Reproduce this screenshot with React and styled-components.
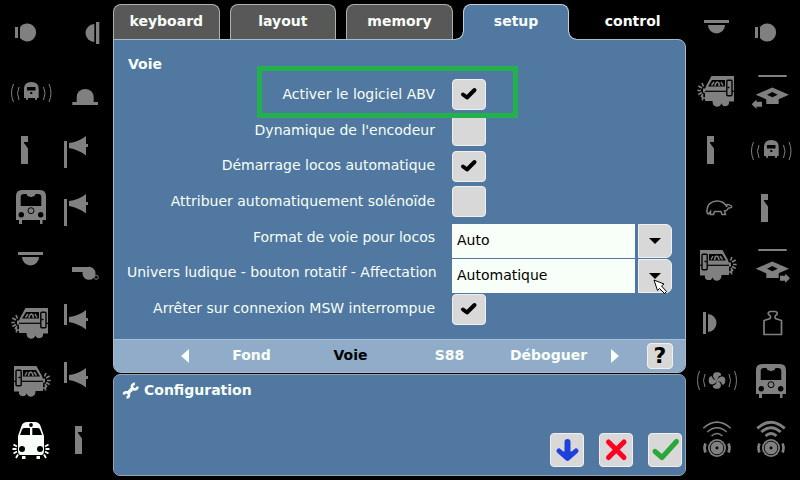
import React, { useState } from 'react'
import styled, { createGlobalStyle, css } from 'styled-components'

const GlobalStyle = createGlobalStyle`
  *, *::before, *::after {
    box-sizing: border-box;
  }
  body {
    margin: 0;
    background: #000;
    color: #f8fff8;
    font-family: "DejaVu Sans", Verdana, sans-serif;
    font-size: 14px;
    line-height: 18px;
  }
  button, select, input {
    font: inherit;
    color: inherit;
    margin: 0;
    padding: 0;
  }
`;

const burst = (
  <g stroke="currentColor" strokeWidth="1.6">
    <path d="M7.300 29.500 H11 M8.300 25 L12 27 M12 22 L13.500 25.500 M8.300 33.500 L12 31.500 M11 36 L13 33" />
    <path d="M13 27.500 h3 v4 h-3 Z" fill="currentColor" stroke="none" />
  </g>
)

const waves = (
  <path
    d="M9.5 23 Q5.5 32 9.5 41 M15 26 Q12 32 15 39 M39.5 26 Q42.5 32 39.5 39 M45 23 Q49 32 45 41"
    fill="none"
    stroke="currentColor"
  />
)

const sideLoco = (
  <g>
    {burst}
    <path d="M21.5 15 H44 V40.5 H39 A3.5 3.5 0 0 1 31.5 42 A3.5 3.5 0 0 1 23 41 L22.5 40 H15 V34 L14.5 30 L16 25 Z" />
    <path d="M12 37 h4 M12.5 34.5 v5" stroke="currentColor" strokeWidth="1.6" />
    <circle cx="26.3" cy="41" r="3.7" />
    <circle cx="35" cy="41" r="3.7" />
    <path d="M22 19 H35 V25.5 H18 Z" fill="#000" />
    <path d="M21.5 24.5 L24 21 M25 25 q0.500 -4 3 -4 M28.500 21 L29.500 25 M31 21 L33 24.500" fill="none" stroke="currentColor" strokeWidth="1.5" />
    <path d="M15 30.300 H44" stroke="#000" strokeWidth="1.2" />
    <rect x="36.8" y="19.3" width="5.2" height="15.4" rx="1" stroke="#000" strokeWidth="1.4" />
    <path d="M37.5 26.5 h2" stroke="#000" strokeWidth="1.5" />
  </g>
)

const horn = (
  <g>
    <path d="M11 24 C17 23.5 23 21 28 17 V36.5 C23 32.5 17 30 11 29 Z" />
    <path d="M28 25 h2 v3 h-2 Z" />
  </g>
)

const gantry = (
  <g>
    <path d="M14.3 14 H42.7 V16 H14.3 Z" />
    <path fillRule="evenodd" d="M11.7 33.7 L28.3 26.5 L45 33.7 L28.3 41 Z M23 33.7 L28.3 36.3 L33.7 33.7 L28.3 31 Z" />
    <path d="M22.3 37.5 H34.7 V43 H22.3 Z" />
  </g>
)

const wheel = (
  <g>
    <circle cx="27" cy="39" r="9" />
    <circle cx="27" cy="39" r="6.8" fill="none" stroke="#000" strokeWidth="0.9" />
    <circle cx="27" cy="39" r="1.4" fill="#000" />
    <path d="M15.500 34.500 Q13.500 39 15.500 43.500 M38.500 34.500 Q40.500 39 38.500 43.500" fill="none" stroke="currentColor" strokeWidth="2.6" />
  </g>
)

const arcs = "M13.3 19.3 Q27 7 40.7 19.3 M17.3 23 Q27 14.5 36.7 23 M21.5 27 Q27 22 32.5 27"

// drawings on a 54 x 58 key
const drawings = {
  lampSide: (
    <g>
      <rect x="11" y="24" width="3" height="11" />
      <path d="M16 24 A9 9 0 1 1 16 35 Z" />
    </g>
  ),
  lampWall: (
    <g>
      <path d="M36.3 21 V39 A8.8 9 0 0 1 36.3 21 Z" />
      <rect x="38" y="19" width="3.3" height="22" />
    </g>
  ),
  lampTop: (
    <g>
      <rect x="14" y="17" width="25" height="3" />
      <path d="M18 22 H35 A8.5 8.5 0 0 1 18 22 Z" />
    </g>
  ),
  bell: (
    <g>
      <path d="M18.7 41 V36 A8.5 8 0 0 1 35.7 36 V41 Z" />
      <rect x="14.3" y="41" width="25.7" height="3" />
    </g>
  ),
  railcar: (
    <g>
      {waves}
      <path fillRule="evenodd" d="M20 37 V28 Q20 21 27.3 21 Q34.7 21 34.7 28 V37 H33 V38.7 H31 V37 H24 V38.7 H22 V37 Z M23 26 V29.5 H31.5 V26 Z M26.3 31 V33 H28.3 V31 Z" />
    </g>
  ),
  marker: <path d="M17 17 H24 V23 H20 V24 L24 29.500 V45 H17 Z" />,
  hornLow: (
    <g>
      <rect x="6" y="22" width="3" height="27" />
      {horn}
    </g>
  ),
  hornHigh: (
    <g>
      <rect x="6" y="11" width="3" height="21" />
      {horn}
    </g>
  ),
  loco: (
    <g>
      <path d="M12 43 V19 Q12 13 18 13 H36 Q42 13 42 19 V43 H38.5 V47 H36 V43 H18 V47 H15 V43 Z" />
      <path d="M16.7 29 V20 Q16.7 17 20 17 H22.5 Q23.5 20 25.5 19.5 Q27 21 28.5 19.5 Q30.5 20 31.5 17 H34 Q37.3 17 37.3 20 V29 Z" fill="#000" />
      <circle cx="17.3" cy="37.7" r="2.7" fill="#000" />
      <circle cx="36.7" cy="37.7" r="2.7" fill="#000" />
      <circle cx="27" cy="33.7" r="3" fill="none" stroke="#000" />
    </g>
  ),
  whistle: (
    <g>
      <path d="M14 32 H32 V37 H14 Z" />
      <circle cx="31" cy="38.3" r="6.5" />
      <circle cx="38.3" cy="42.3" r="2" fill="#000" stroke="currentColor" />
    </g>
  ),
  locoLeft: sideLoco,
  locoRight: <g transform="translate(54 0) scale(-1 1)">{sideLoco}</g>,
  lampWallRight: (
    <g>
      <path d="M18 21 V39 A8.5 9 0 0 0 18 21 Z" />
      <rect x="13" y="19" width="3" height="22" />
    </g>
  ),
  headlights: (
    <g>
      <path d="M16 46 Q14 45 14 42 V27 L17.500 17 Q19 13 23 13 H31 Q35 13 36.500 17 L40 27 V42 Q40 45 38 46 Z" />
      <path d="M20 19 H26 V26 H16 L18 20.500 Q18.500 19 20 19 Z M28.300 19 H34 Q35.500 19 36 20.500 L38 26 H28.300 Z" fill="#000" />
      <circle cx="27" cy="16" r="1.900" fill="#000" />
      <circle cx="18" cy="40" r="3" fill="#000" />
      <circle cx="36" cy="40" r="3" fill="#000" />
      <path d="M18 47 h3.500 v3 h-3.500 Z M32.500 47 h3.500 v3 h-3.500 Z" />
      <path d="M12.500 40 H8.500 M13 37.500 L9.500 35.500 M13 42.500 L9.500 44.500 M14 45.500 L12 49 M41.500 40 H45.500 M41 37.500 L44.500 35.500 M41 42.500 L44.500 44.500 M40 45.500 L42 49" stroke="currentColor" strokeWidth="1.800" />
    </g>
  ),
  gantryLeft: (
    <g>
      {gantry}
      <path d="M7.7 43.3 L12.5 38.5 V40.8 H18 V45.8 H12.5 V48 Z" />
    </g>
  ),
  gantryRight: (
    <g>
      {gantry}
      <path d="M46 43.3 L41.2 38.5 V40.8 H36 V45.8 H41.2 V48 Z" />
    </g>
  ),
  turtle: (
    <path
      d="M17 34 C17 27 22 24 27 24 C32 24 35.5 27 37 30 L36.5 28 Q38 26.5 41.5 29 Q42.5 31 38.5 31 Q37 34 34.5 34 L35.5 37.5 H32 L31 34.5 H24.5 L23.5 37.5 H20.5 L20.5 34.5 L18.5 37 Q16.5 36 17 34 Z"
      fill="none"
      stroke="currentColor"
      strokeWidth="1.5"
    />
  ),
  weight: (
    <path
      d="M20 41.5 V27.5 L26 25.5 Q27.5 23 24.5 21.5 Q23.5 19 26.5 18.5 H31 Q34 19 33 21.5 Q30 23 31.5 25.5 L37.5 27.5 V41.5 Z"
      fill="none"
      stroke="currentColor"
      strokeWidth="1.7"
    />
  ),
  fan: (
    <g>
      <path
        d="M9.5 20 Q5.5 29.5 9.5 39 M15 23 Q12 29.5 15 36 M39 23 Q42 29.5 39 36 M44.5 20 Q48.5 29.5 44.5 39"
        fill="none"
        stroke="currentColor"
      />
      {[0, 90, 180, 270].map((a) => (
        <path key={a} transform={`rotate(${a} 27 29.5)`} d="M27.500 29.500 C23 28.500 21.500 23 25 21.500 C29 20.500 32 22.500 31 24.500 C28.500 25 27.500 26.500 27.500 29.500 Z" />
      ))}
    </g>
  ),
  soundLow: (
    <g>
      {wheel}
      <path d={arcs} fill="none" stroke="currentColor" strokeWidth="1.5" />
    </g>
  ),
  soundHigh: (
    <g>
      {wheel}
      <path d={arcs} fill="none" stroke="currentColor" strokeWidth="2.9" />
    </g>
  ),
}

const leftKeys = [
  'lampSide', 'lampWall',
  'railcar', 'bell',
  'marker', 'hornLow',
  'loco', 'hornLow',
  'lampTop', 'whistle',
  'locoLeft', 'hornHigh',
  'locoRight', 'hornHigh',
  'headlights', 'marker',
]

const rightKeys = [
  'lampTop', 'lampSide',
  'locoLeft', 'gantryLeft',
  'marker', 'railcar',
  'turtle', 'marker',
  'locoRight', 'gantryRight',
  'lampWallRight', 'weight',
  'fan', 'loco',
  'soundLow', 'soundHigh',
]

const tabs = ['keyboard', 'layout', 'memory', 'setup', 'control']
const pages = ['Fond', 'Voie', 'S88', 'Déboguer']

function FunctionKeys({ keys, side }) {
  return (
    <Keys aria-label={side}>
      {keys.map((name, i) => (
        <Key key={i} type="button" aria-label={name} $lit={name === 'headlights'}>
          <svg width="54" height="58" viewBox="0 0 54 58" fill="currentColor">
            {drawings[name]}
          </svg>
        </Key>
      ))}
    </Keys>
  )
}

function CheckRow({ id, label, checked, marked }) {
  const [on, setOn] = useState(checked)
  return (
    <Row $marked={marked}>
      <Label htmlFor={id}>{label}</Label>
      <CheckWrap>
        <Check id={id} type="checkbox" checked={on} onChange={() => setOn(!on)} />
        {on && (
          <Tick width="34" height="30" viewBox="0 0 34 30">
            <path d="M11 15.5 L15 18.5 L22.5 11" fill="none" stroke="#000" strokeWidth="4" strokeLinecap="round" strokeLinejoin="round" />
          </Tick>
        )}
      </CheckWrap>
    </Row>
  )
}

function SelectRow({ id, label, value, children }) {
  return (
    <Row>
      <Label htmlFor={id}>{label}</Label>
      <Combo>
        <Select id={id} defaultValue={value}>
          <option>{value}</option>
        </Select>
        <Arrow type="button" aria-label={label}>
          <svg width="12" height="6" viewBox="0 0 12 6">
            <path d="M0 0 H12 L6 6 Z" fill="#000" />
          </svg>
        </Arrow>
        {children}
      </Combo>
    </Row>
  )
}

function App() {
  const [tab, setTab] = useState('setup')
  const [page, setPage] = useState('Voie')
  return (
    <Screen>
      <GlobalStyle />
      <FunctionKeys keys={leftKeys} side="left" />
      <Center>
        <Tabs>
          {tabs.map((t) => (
            <Tab key={t} type="button" $active={t === tab} $bare={t === 'control'} onClick={() => setTab(t)}>
              {t}
            </Tab>
          ))}
        </Tabs>
        <Panel>
          <Title>Voie</Title>
          <Form>
            <CheckRow id="abv" label="Activer le logiciel ABV" checked marked />
            <CheckRow id="encoder" label="Dynamique de l'encodeur" checked={false} />
            <CheckRow id="start" label="Démarrage locos automatique" checked />
            <CheckRow id="solenoid" label="Attribuer automatiquement solénoïde" checked={false} />
            <SelectRow id="format" label="Format de voie pour locos" value="Auto" />
            <SelectRow id="knob" label="Univers ludique - bouton rotatif - Affectation" value="Automatique">
              <Pointer width="15" height="17" viewBox="0 0 15 17">
                <path d="M1 1 L11 5 L8.5 7 L13.5 12.5 L11.5 14.5 L6.5 9.5 L4.5 11.5 Z" fill="#fff" stroke="#000" />
              </Pointer>
            </SelectRow>
            <CheckRow id="msw" label="Arrêter sur connexion MSW interrompue" checked />
          </Form>
          <Pager>
            <Step type="button" aria-label="previous">
              <svg width="8" height="14" viewBox="0 0 8 14"><path d="M8 0 V14 L0 7 Z" fill="currentColor" /></svg>
            </Step>
            <Pages>
              {pages.map((p) => (
                <Page key={p} type="button" $active={p === page} onClick={() => setPage(p)}>{p}</Page>
              ))}
            </Pages>
            <Step type="button" aria-label="next">
              <svg width="8" height="14" viewBox="0 0 8 14"><path d="M0 0 V14 L8 7 Z" fill="currentColor" /></svg>
            </Step>
            <Help type="button">?</Help>
          </Pager>
        </Panel>
        <Config>
          <ConfigTitle>
            <svg width="17" height="17" viewBox="0 0 17 17" fill="none" stroke="currentColor">
              <path d="M5.5 11.5 L11.5 5.5" strokeWidth="3.5" />
              <path d="M13 1.8 A2.8 2.8 0 1 0 15.5 4.5" strokeWidth="2.6" />
              <path d="M1.8 12.5 A2.6 2.6 0 1 1 4.5 15.5" strokeWidth="2.6" />
            </svg>
            Configuration
          </ConfigTitle>
          <Actions>
            <Action type="button" aria-label="down">
              <svg width="32" height="32" viewBox="0 0 32 32">
                <path d="M16.5 8 V21" stroke="#2040dc" strokeWidth="6" strokeLinecap="round" />
                <path d="M8 17 L16.5 24.5 L25 17" fill="none" stroke="#2040dc" strokeWidth="5" strokeLinecap="round" strokeLinejoin="round" />
                <path d="M9 17.500 H24 L16.500 24 Z" fill="#2040dc" />
              </svg>
            </Action>
            <Action type="button" aria-label="cancel">
              <svg width="32" height="32" viewBox="0 0 32 32">
                <path d="M8.5 8 L24 23.5 M24 8 L8.5 23.5" stroke="#ff0020" strokeWidth="5" strokeLinecap="round" />
              </svg>
            </Action>
            <Action type="button" aria-label="ok">
              <svg width="32" height="32" viewBox="0 0 32 32">
                <path d="M6 17.5 L13 23.5 L27.5 7.5" fill="none" stroke="#28a838" strokeWidth="5" strokeLinecap="round" strokeLinejoin="round" />
              </svg>
            </Action>
          </Actions>
        </Config>
      </Center>
      <FunctionKeys keys={rightKeys} side="right" />
    </Screen>
  )
}

export default App;

const raised = css`
  background: #d8d8d8;
  border: 1px solid #f0f0f0;
  border-radius: 4px;
`;

const Screen = styled.div`
  display: grid;
  grid-template-columns: 113px 1fr 114px;
  min-height: 100vh;
`;

const Keys = styled.nav`
  display: grid;
  grid-template-columns: 54px 54px;
  grid-auto-rows: 58px;
  align-content: start;
  padding: 3px 0 0 4px;
`;

const Key = styled.button`
  display: flex;
  border: 0;
  background: none;
  color: ${(props) => (props.$lit ? '#f8fff8' : '#808080')};
`;

const Center = styled.main`
  display: flex;
  flex-direction: column;
  gap: 1px;
  padding: 4px 0;
`;

const Tabs = styled.div`
  display: grid;
  grid-template-columns: repeat(5, 1fr);
  gap: 10px;
  margin-bottom: -2px;
`;

const flare = css`
  content: "";
  position: absolute;
  bottom: 0;
  width: 8px;
  height: 8px;
`;

const Tab = styled.button`
  height: 36px;
  padding-bottom: 4px;
  border: 1px solid #a8b4a8;
  border-bottom: 0;
  border-radius: 8px 8px 0 0;
  background: #585858;
  font-weight: bold;
  ${(props) => props.$bare && css`
    border-color: transparent;
    background: none;
  `}
  ${(props) => props.$active && css`
    position: relative;
    z-index: 1;
    border-color: #c0d0d8;
    background: #5078a0;
    &::before {
      ${flare}
      left: -8px;
      background: radial-gradient(circle at 0 0, #000 6px, #c0d0d8 7px, #5078a0 8px);
    }
    &::after {
      ${flare}
      right: -8px;
      background: radial-gradient(circle at 100% 0, #000 6px, #c0d0d8 7px, #5078a0 8px);
    }
  `}
`;

const Panel = styled.section`
  display: flex;
  flex-direction: column;
  flex: 1;
  border: 1px solid #a8bcc8;
  border-radius: 0 8px 8px 8px;
  background: #5078a0;
`;

const Title = styled.h2`
  margin: 0;
  padding: 15px 14px 4px;
  font-size: 14px;
`;

const Form = styled.form`
  display: grid;
  grid-auto-rows: minmax(34px, 1fr);
  flex: 1;
  padding: 0 13px 12px;
`;

const Row = styled.div`
  display: flex;
  align-items: center;
  gap: 5px;
  ${(props) => props.$marked && css`
    position: relative;
    &::after {
      content: "";
      position: absolute;
      top: -11px;
      left: 130px;
      width: 261px;
      height: 52px;
      border: 5px solid #22b14c;
      pointer-events: none;
      z-index: 1;
    }
  `}
`;

const Label = styled.label`
  width: 320px;
  padding: 0 12px 2px 0;
  overflow: hidden;
  white-space: nowrap;
  text-align: right;
`;

const CheckWrap = styled.span`
  display: grid;
  > * {
    grid-area: 1 / 1;
  }
`;

const Check = styled.input`
  appearance: none;
  width: 34px;
  height: 31px;
  ${raised}
`;

const Tick = styled.svg`
  z-index: 0;
  pointer-events: none;
`;

const Combo = styled.div`
  position: relative;
  display: grid;
  grid-template-columns: 1fr 34px;
  gap: 3px;
  flex: 1;
  height: 34px;
  margin: 3px 0 -3px;
`;

const Select = styled.select`
  appearance: none;
  padding: 0 5px 2px;
  border: 0;
  border-radius: 0;
  background: #f8fff8;
  color: #000;
`;

const Arrow = styled.button`
  display: grid;
  place-items: center;
  ${raised}
  border-radius: 0 6px 6px 0;
`;

const Pointer = styled.svg`
  position: absolute;
  right: 4px;
  bottom: -3px;
  pointer-events: none;
`;

const Pager = styled.div`
  display: flex;
  align-items: center;
  gap: 7px;
  height: 33px;
  padding: 0 12px 0 61px;
  border-top: 1px solid #a8c0d8;
  border-radius: 0 0 7px 7px;
  background: #90acc8;
`;

const Step = styled.button`
  display: grid;
  place-items: center;
  width: 20px;
  height: 26px;
  border: 0;
  background: none;
`;

const Pages = styled.div`
  display: grid;
  grid-template-columns: repeat(4, 1fr);
  flex: 1;
`;

const Page = styled.button`
  padding-bottom: 2px;
  border: 0;
  background: none;
  font-weight: bold;
  color: ${(props) => (props.$active ? '#000' : '#f8fff8')};
`;

const Help = styled.button`
  width: 26px;
  height: 26px;
  margin-left: 15px;
  ${raised}
  color: #000;
  font-size: 22px;
  font-weight: bold;
`;

const Config = styled.section`
  display: flex;
  flex-direction: column;
  justify-content: space-between;
  min-height: 102px;
  padding: 6px 3px 8px 8px;
  border: 1px solid #90a8b0;
  border-radius: 7px;
  background: #5078a0;
`;

const ConfigTitle = styled.h2`
  display: flex;
  align-items: center;
  gap: 5px;
  margin: 0;
  font-size: 14px;
`;

const Actions = styled.div`
  display: flex;
  justify-content: flex-end;
  gap: 15px;
`;

const Action = styled.button`
  display: flex;
  width: 34px;
  height: 34px;
  ${raised}
`;
